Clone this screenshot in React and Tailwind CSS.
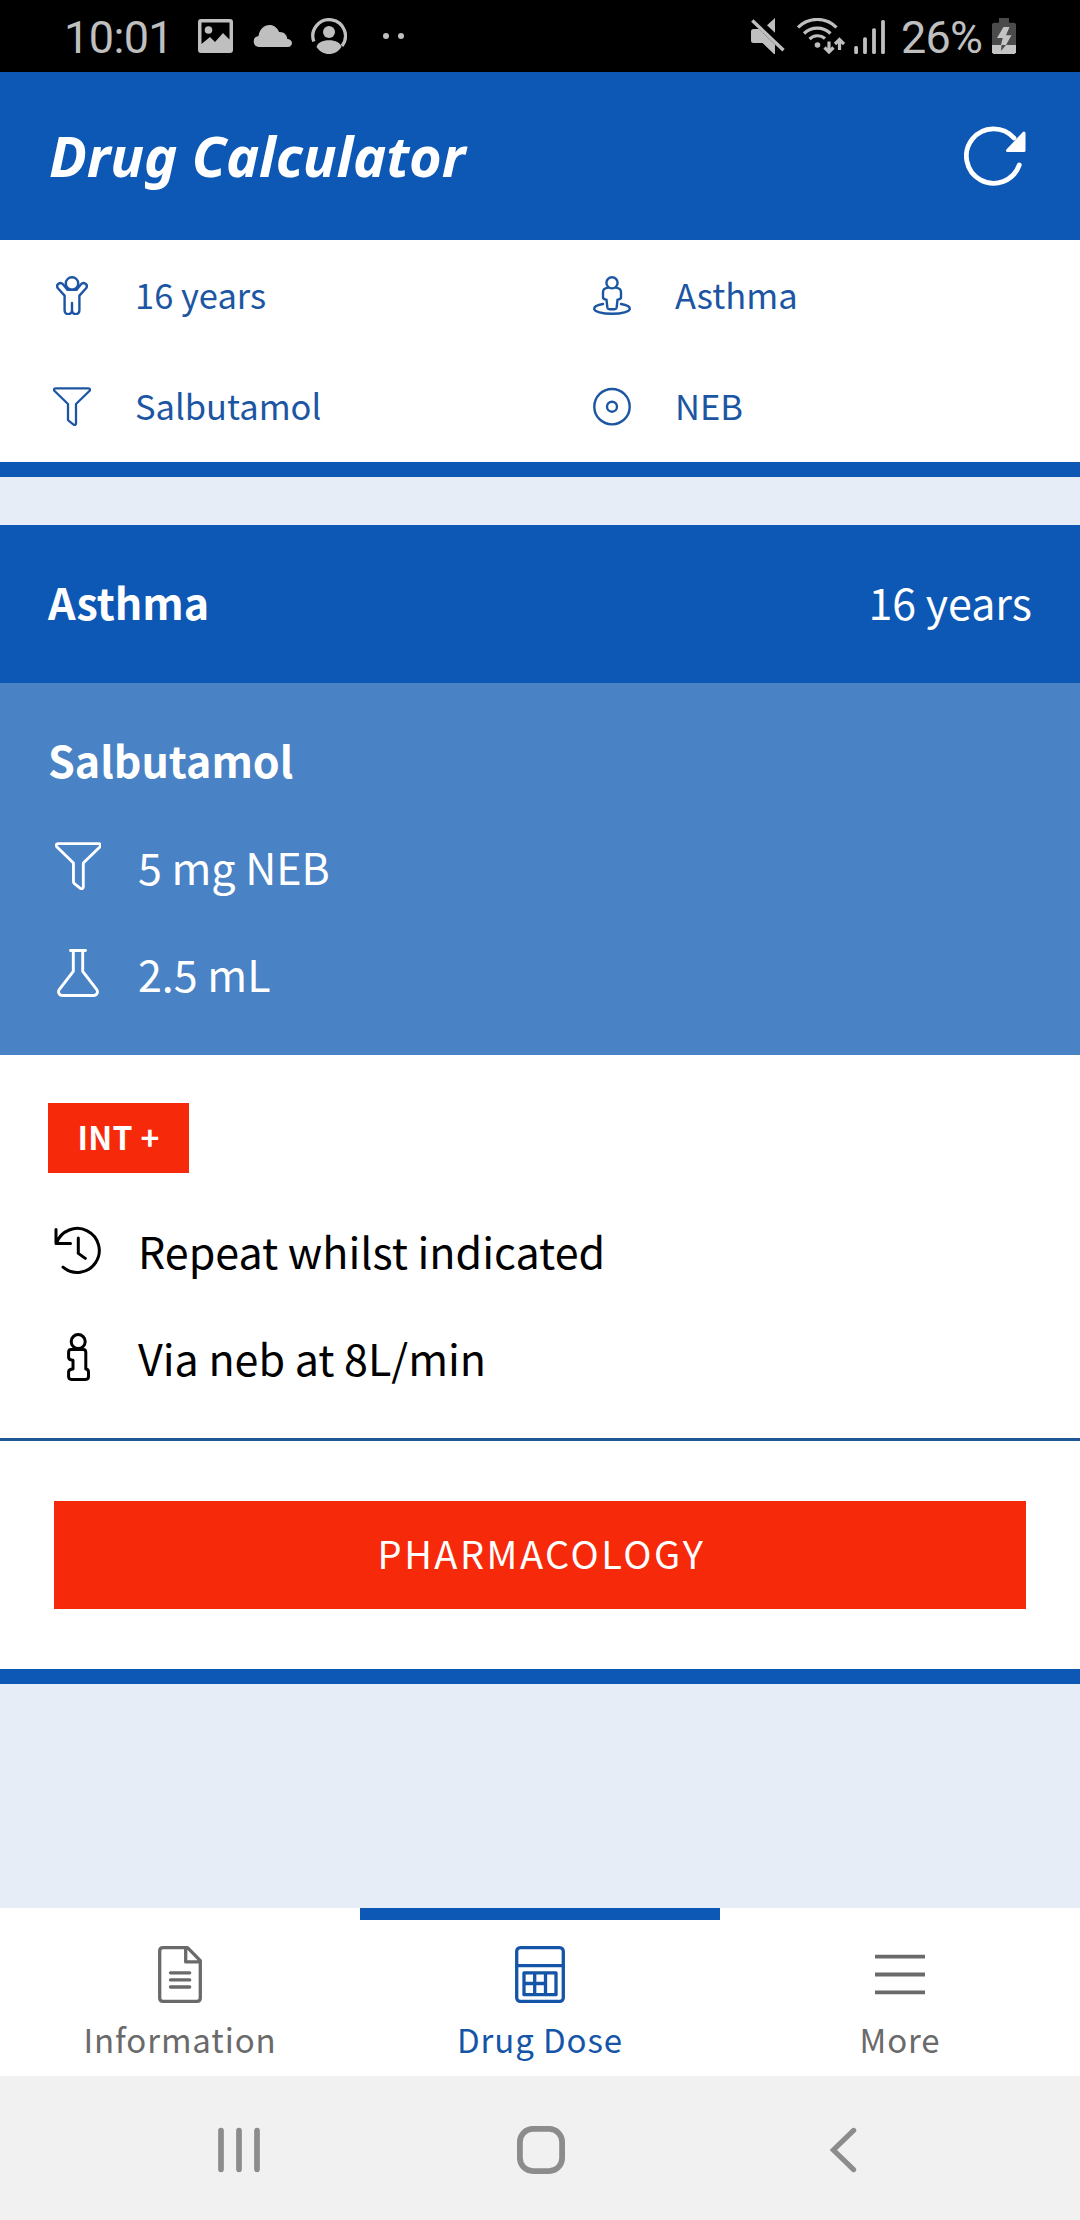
import clsx from 'clsx';

const summary = [
  { icon: ChildIcon, label: '16 years' },
  { icon: StreetViewIcon, label: 'Asthma' },
  { icon: FunnelIcon, label: 'Salbutamol' },
  { icon: DiscIcon, label: 'NEB' },
];

const tabs = [
  { icon: DocumentIcon, label: 'Information' },
  { icon: CalculatorIcon, label: 'Drug Dose', active: true },
  { icon: MenuIcon, label: 'More' },
];

export default function App() {
  return (
    <div className="flex h-[2220px] w-[1080px] flex-col overflow-hidden bg-[#e6edf7] font-['Noto_Sans_CJK_SC','Noto_Sans',sans-serif]">
      <StatusBar />
      <Header />
      <Summary />
      <main className="flex-1 pt-12">
        <DoseCard />
      </main>
      <TabBar />
      <SystemNav />
    </div>
  );
}

function StatusBar() {
  return (
    <div className="flex h-[72px] shrink-0 items-center bg-black pr-16 pl-16 font-['Roboto',sans-serif] text-[45px] leading-none text-[#bfbfbf]">
      <span className="w-[134px] pt-0.5 tracking-[-0.6px]">10:01</span>
      <PictureIcon className="h-[34px] w-[35px]" />
      <CloudIcon className="ml-5 h-[22px] w-[39px]" />
      <AccountIcon className="ml-[19px] h-9 w-9" />
      <span className="ml-9 flex gap-[9px]">
        <i className="size-1.5 rounded-full bg-current" />
        <i className="size-1.5 rounded-full bg-current" />
      </span>
      <MuteIcon className="ml-auto h-9 w-[34px]" />
      <WifiIcon className="ml-3 h-9 w-12" />
      <SignalIcon className="ml-[9px] h-9 w-8" />
      <span className="ml-[15px] w-[91px] pt-0.5 tracking-[-0.8px]">26%</span>
      <BatteryIcon className="h-9 w-6" />
    </div>
  );
}

function Header() {
  return (
    <header className="flex h-[168px] shrink-0 items-center justify-between bg-[#0d58b4] pr-[54px] pl-[49px] text-white">
      <h1 className="pb-0.5 font-['Noto_Sans',sans-serif] text-[56px] leading-none font-bold tracking-[-0.1px] italic">
        Drug Calculator
      </h1>
      <RefreshIcon className="h-[60px] w-[62px]" />
    </header>
  );
}

function Summary() {
  return (
    <section className="grid h-[237px] shrink-0 grid-cols-2 grid-rows-[111px_111px] border-b-[15px] border-[#0d58b4] bg-white text-[#1c56a3]">
      {summary.map(({ icon: Icon, label }) => (
        <div key={label} className="flex items-center pl-[53px]">
          <span className="flex w-[38px] justify-center">
            <Icon className="h-[39px]" />
          </span>
          <span className="ml-11 pb-0.5 text-[34.5px] leading-none">{label}</span>
        </div>
      ))}
    </section>
  );
}

function DoseCard() {
  return (
    <article className="border-b-[15px] border-[#0d58b4] bg-white">
      <div className="flex h-[158px] items-center justify-between bg-[#0d58b4] px-12 pb-1.5 text-[43px] leading-none text-white">
        <h2 className="font-bold">Asthma</h2>
        <span>16 years</span>
      </div>
      <div className="h-[372px] bg-[#4982c5] px-12 pt-[49px] text-white">
        <h3 className="text-[43px] leading-[54px] font-bold">Salbutamol</h3>
        <DoseRow icon={FunnelIcon}>5 mg NEB</DoseRow>
        <DoseRow icon={FlaskIcon}>2.5 mL</DoseRow>
      </div>
      <div className="h-[386px] border-b-[3px] border-[#1f5797] px-12 pt-12 text-black">
        <div className="flex h-[70px] w-[141px] items-center justify-center bg-[#f7290b] pb-1 text-[32px] leading-none font-bold tracking-[0.3px] text-white">
          INT +
        </div>
        <div className="-mt-[3px]">
          <DoseRow icon={HistoryIcon}>Repeat whilst indicated</DoseRow>
          <DoseRow icon={InfoIcon}>Via neb at 8L/min</DoseRow>
        </div>
      </div>
      <div className="px-[54px] py-[60px]">
        <button className="h-[108px] w-full bg-[#f7290b] pb-1 pl-[3px] text-[38px] leading-none tracking-[2.5px] text-white">
          PHARMACOLOGY
        </button>
      </div>
    </article>
  );
}

function DoseRow({ icon: Icon, children }) {
  return (
    <div className="mt-[53px] flex h-[54px] items-center">
      <span className="flex w-[60px] justify-center">
        <Icon className="h-12" />
      </span>
      <span className="ml-[30px] text-[43px] leading-none">{children}</span>
    </div>
  );
}

function TabBar() {
  return (
    <nav className="grid h-[168px] shrink-0 grid-cols-3 bg-white">
      {tabs.map(({ icon: Icon, label, active }) => (
        <a
          key={label}
          className={clsx(
            'flex flex-col items-center border-t-[12px] pt-[26px]',
            active ? 'border-[#0d58b4] text-[#1455a8]' : 'border-white text-[#6a6a6a]'
          )}
        >
          <Icon className="h-[57px]" />
          <span className="mt-[19px] text-[33px] leading-[34px] tracking-[0.9px]">{label}</span>
        </a>
      ))}
    </nav>
  );
}

function SystemNav() {
  return (
    <div className="flex h-36 shrink-0 items-center bg-[#f1f1f1] pt-1 pl-[218px] text-[#8c8c8c]">
      <svg viewBox="0 0 42 48" className="h-12 w-[42px]" {...stroke} strokeWidth="5.7">
        <path d="M3 4.7v38.6M21 4.7v38.6M39 4.7v38.6" />
      </svg>
      <svg viewBox="0 0 48 48" className="ml-[257px] h-12 w-12" {...stroke} strokeWidth="5.8">
        <rect x="2.9" y="2.9" width="42.2" height="42.2" rx="13" />
      </svg>
      <svg viewBox="0 0 28 48" className="ml-[264px] h-12 w-7" {...stroke} strokeWidth="5.2">
        <path d="M24.6 4.4 4.4 24l20.2 19.6" strokeLinejoin="miter" />
      </svg>
    </div>
  );
}

const stroke = {
  fill: 'none',
  stroke: 'currentColor',
  strokeLinecap: 'round',
  strokeLinejoin: 'round',
};

function ChildIcon({ className }) {
  return (
    <svg viewBox="0 0 32 39" className={className} {...stroke} strokeWidth="2.4">
      <circle cx="16" cy="7.4" r="6.2" />
      <path d="M16 27v7.5a3.7 3.7 0 0 1-7.4 0V19.6L1.9 12.3C-.6 8.6 4.3 5.2 7 8.2l4.6 5.7h8.8L25 8.2c2.700-3 7.600.4 5.100 4.100l-6.700 7.300v14.900a3.700 3.700 0 0 1-7.400 0" />
    </svg>
  );
}

function StreetViewIcon({ className }) {
  return (
    <svg viewBox="0 0 38 39" className={className} {...stroke} strokeWidth="2.4">
      <circle cx="19" cy="6.8" r="5.6" />
      <path d="M15 11.6c-3 .4-5 2-5 4.600v4.800c0 1.600 1.200 2.600 3.500 2.600l.8 7.600c.2 1.400.8 2 2 2h5.400c1.200 0 1.800-.6 2-2l.8-7.600c2.300 0 3.500-1 3.500-2.600v-4.800c0-2.600-2-4.200-5-4.600" />
      <path d="M10 28c-5.400.8-8.800 2.600-8.800 4.700 0 2.900 8 5.100 17.800 5.100s17.800-2.200 17.800-5.100c0-2.100-3.400-3.900-8.800-4.700" />
    </svg>
  );
}

function FunnelIcon({ className }) {
  return (
    <svg viewBox="0 0 38 39" className={className} {...stroke} strokeWidth="2.3">
      <path d="M2.5 1.3h33c1.600 0 2 1.600.9 2.700L23 17v19.600c0 1.300-1.300 1.800-2.400 1l-4.800-3.700c-.5-.4-.8-1-.8-1.600V17L1.600 4C.5 2.900.9 1.300 2.500 1.300z" />
    </svg>
  );
}

function DiscIcon({ className }) {
  return (
    <svg viewBox="0 0 38 39" className={className} {...stroke} strokeWidth="2.4">
      <circle cx="19" cy="19.7" r="17.7" />
      <circle cx="19" cy="19.7" r="5" />
    </svg>
  );
}

function FlaskIcon({ className }) {
  return (
    <svg viewBox="0 0 42 48" className={className} {...stroke} strokeWidth="2.9">
      <path d="M13.500 1.500h15M16.300 1.500v20.800L2.400 40.300c-1.900 2.800-.3 6.200 3 6.200h31.200c3.300 0 4.900-3.400 3-6.200L25.700 22.300V1.500" />
    </svg>
  );
}

function HistoryIcon({ className }) {
  return (
    <svg viewBox="0 0 48 48" className={className} {...stroke} strokeWidth="3">
      <path d="M2 3.500v14h14.500M2.600 16.900A22 22 0 1 1 9 41.200M24.300 12v15.400l7 5" />
    </svg>
  );
}

function InfoIcon({ className }) {
  return (
    <svg viewBox="0 0 23 48" className={className} {...stroke} strokeWidth="3">
      <circle cx="11.2" cy="8.600" r="7" />
      <path d="M4 16.500h12c1.800 0 2.800 1 2.800 2.800V36c2 .2 2.700 1.200 2.700 3v4.600c0 1.800-1 2.800-2.800 2.800H4.400c-1.800 0-2.800-1-2.800-2.800V39c0-1.800 1.200-2.900 4.400-3v-8.800c-3.200-.1-4.400-1.100-4.400-2.900v-5c0-1.800 1-2.800 2.400-2.800z" />
    </svg>
  );
}

function RefreshIcon({ className }) {
  return (
    <svg viewBox="0 0 62 60" className={className} {...stroke} strokeWidth="4.8">
      <path d="M55.300 38.900A27.200 27.200 0 1 1 50 12" />
      <path d="M60 7v17.500H43.500z" fill="currentColor" strokeWidth="3" />
    </svg>
  );
}

function DocumentIcon({ className }) {
  return (
    <svg viewBox="0 0 44 57" className={className} {...stroke} strokeWidth="3.3">
      <path d="M5 1.700h24.500l12.800 12.900V52c0 2-1.300 3.300-3.300 3.300H5c-2 0-3.300-1.300-3.300-3.300V5c0-2 1.300-3.300 3.300-3.300zM27.700 2v13.900h14M12.500 26.800h19.200M12.500 33.900h19.200M12.500 41h19.200" />
    </svg>
  );
}

function CalculatorIcon({ className }) {
  return (
    <svg viewBox="0 0 50 57" className={className} {...stroke} strokeWidth="3.3">
      <rect x="1.700" y="1.700" width="46.600" height="53.600" rx="3.500" />
      <path d="M2 19.700h46M9 26.800h32v21.900H9zM19.700 27v21.500M30.500 27v21.500M9 37.500h21.500" />
    </svg>
  );
}

function MenuIcon({ className }) {
  return (
    <svg viewBox="0 0 50 57" className={className} {...stroke} strokeWidth="3.8">
      <path d="M0 10.700h50M0 28.500h50M0 46.300h50" strokeLinecap="butt" />
    </svg>
  );
}

function PictureIcon({ className }) {
  return (
    <svg viewBox="0 0 35 34" className={className} fill="currentColor">
      <path
        fillRule="evenodd"
        d="M3 0h29a3 3 0 0 1 3 3v28a3 3 0 0 1-3 3H3a3 3 0 0 1-3-3V3a3 3 0 0 1 3-3zm.5 3.500V25l8.500-7 5 5 8-9 6.500 6.500v-17z"
      />
      <circle cx="10.500" cy="11" r="3.800" />
    </svg>
  );
}

function CloudIcon({ className }) {
  return (
    <svg viewBox="0 0 39 22" className={className} fill="currentColor">
      <path d="M5.500 22a5.600 5.600 0 0 1 0-11.100C6.500 4.400 11 0 16.500 0c4.300 0 7.900 2.700 9.600 7 4.400-.4 8 2.500 8.200 7 2.600 0 4.700 1.700 4.700 4s-1.700 4-4 4z" />
    </svg>
  );
}

function AccountIcon({ className }) {
  return (
    <svg viewBox="0 0 36 36" className={className} fill="currentColor">
      <path d="M2.800 23.500A16.300 16.300 0 1 1 31 28" fill="none" stroke="currentColor" strokeWidth="3.300" />
      <circle cx="18" cy="14" r="6" />
      <path d="M5.500 29c1-4.500 6-6.800 12.500-6.800s11.500 2.300 12.500 6.800C27.500 33.500 23 36 18 36S8.500 33.500 5.500 29z" />
    </svg>
  );
}

function MuteIcon({ className }) {
  return (
    <svg viewBox="0 0 34 36" className={className} fill="currentColor">
      <path d="M2.500 11H8l16 15.500V36h-1L11.500 25h-9A2.500 2.500 0 0 1 0 22.500v-9A2.500 2.500 0 0 1 2.500 11zM16 7.300 24 0v14.800z" />
      <path d="M1.300 2.500 32.500 32.300" fill="none" stroke="currentColor" strokeWidth="3.400" />
    </svg>
  );
}

function WifiIcon({ className }) {
  return (
    <svg viewBox="0 0 48 36" className={className} fill="none" stroke="currentColor" strokeWidth="3.200">
      <path d="M1 9.500a27 27 0 0 1 38.500 0M7 15.500a19 19 0 0 1 26.500 0M12.500 21a11.500 11.500 0 0 1 15.500-.5" />
      <circle cx="20.500" cy="27" r="2.800" fill="currentColor" stroke="none" />
      <path d="M32 23.500v10M27.500 29.500l4.500 4.500 4.500-4.500M42.500 32V22M38 26l4.500-4.500L47 26" />
    </svg>
  );
}

function SignalIcon({ className }) {
  return (
    <svg viewBox="0 0 32 36" className={className} fill="currentColor">
      <rect x="0.200" y="28" width="3.800" height="8" rx="1.500" />
      <rect x="9.100" y="19.300" width="3.800" height="16.700" rx="1.500" />
      <rect x="18.100" y="10.300" width="3.800" height="25.700" rx="1.500" />
      <rect x="27.100" y="2" width="3.800" height="34" rx="1.500" />
    </svg>
  );
}

function BatteryIcon({ className }) {
  return (
    <svg viewBox="0 0 24 36" className={className}>
      <path d="M7 0h10v4.700h5.500L24 6v21H0V6l1.500-1.300H7z" fill="#4b4b4b" />
      <path d="M0 27h24v7.500L22.500 36h-21L0 34.500z" fill="#c4c4c4" />
      <path d="M11.500 9h6L14 17.300h5.500L14 27H9l1.700-7H5z" fill="#c4c4c4" />
      <path d="M9.500 27H14l-5 6z" fill="#4b4b4b" />
    </svg>
  );
}
